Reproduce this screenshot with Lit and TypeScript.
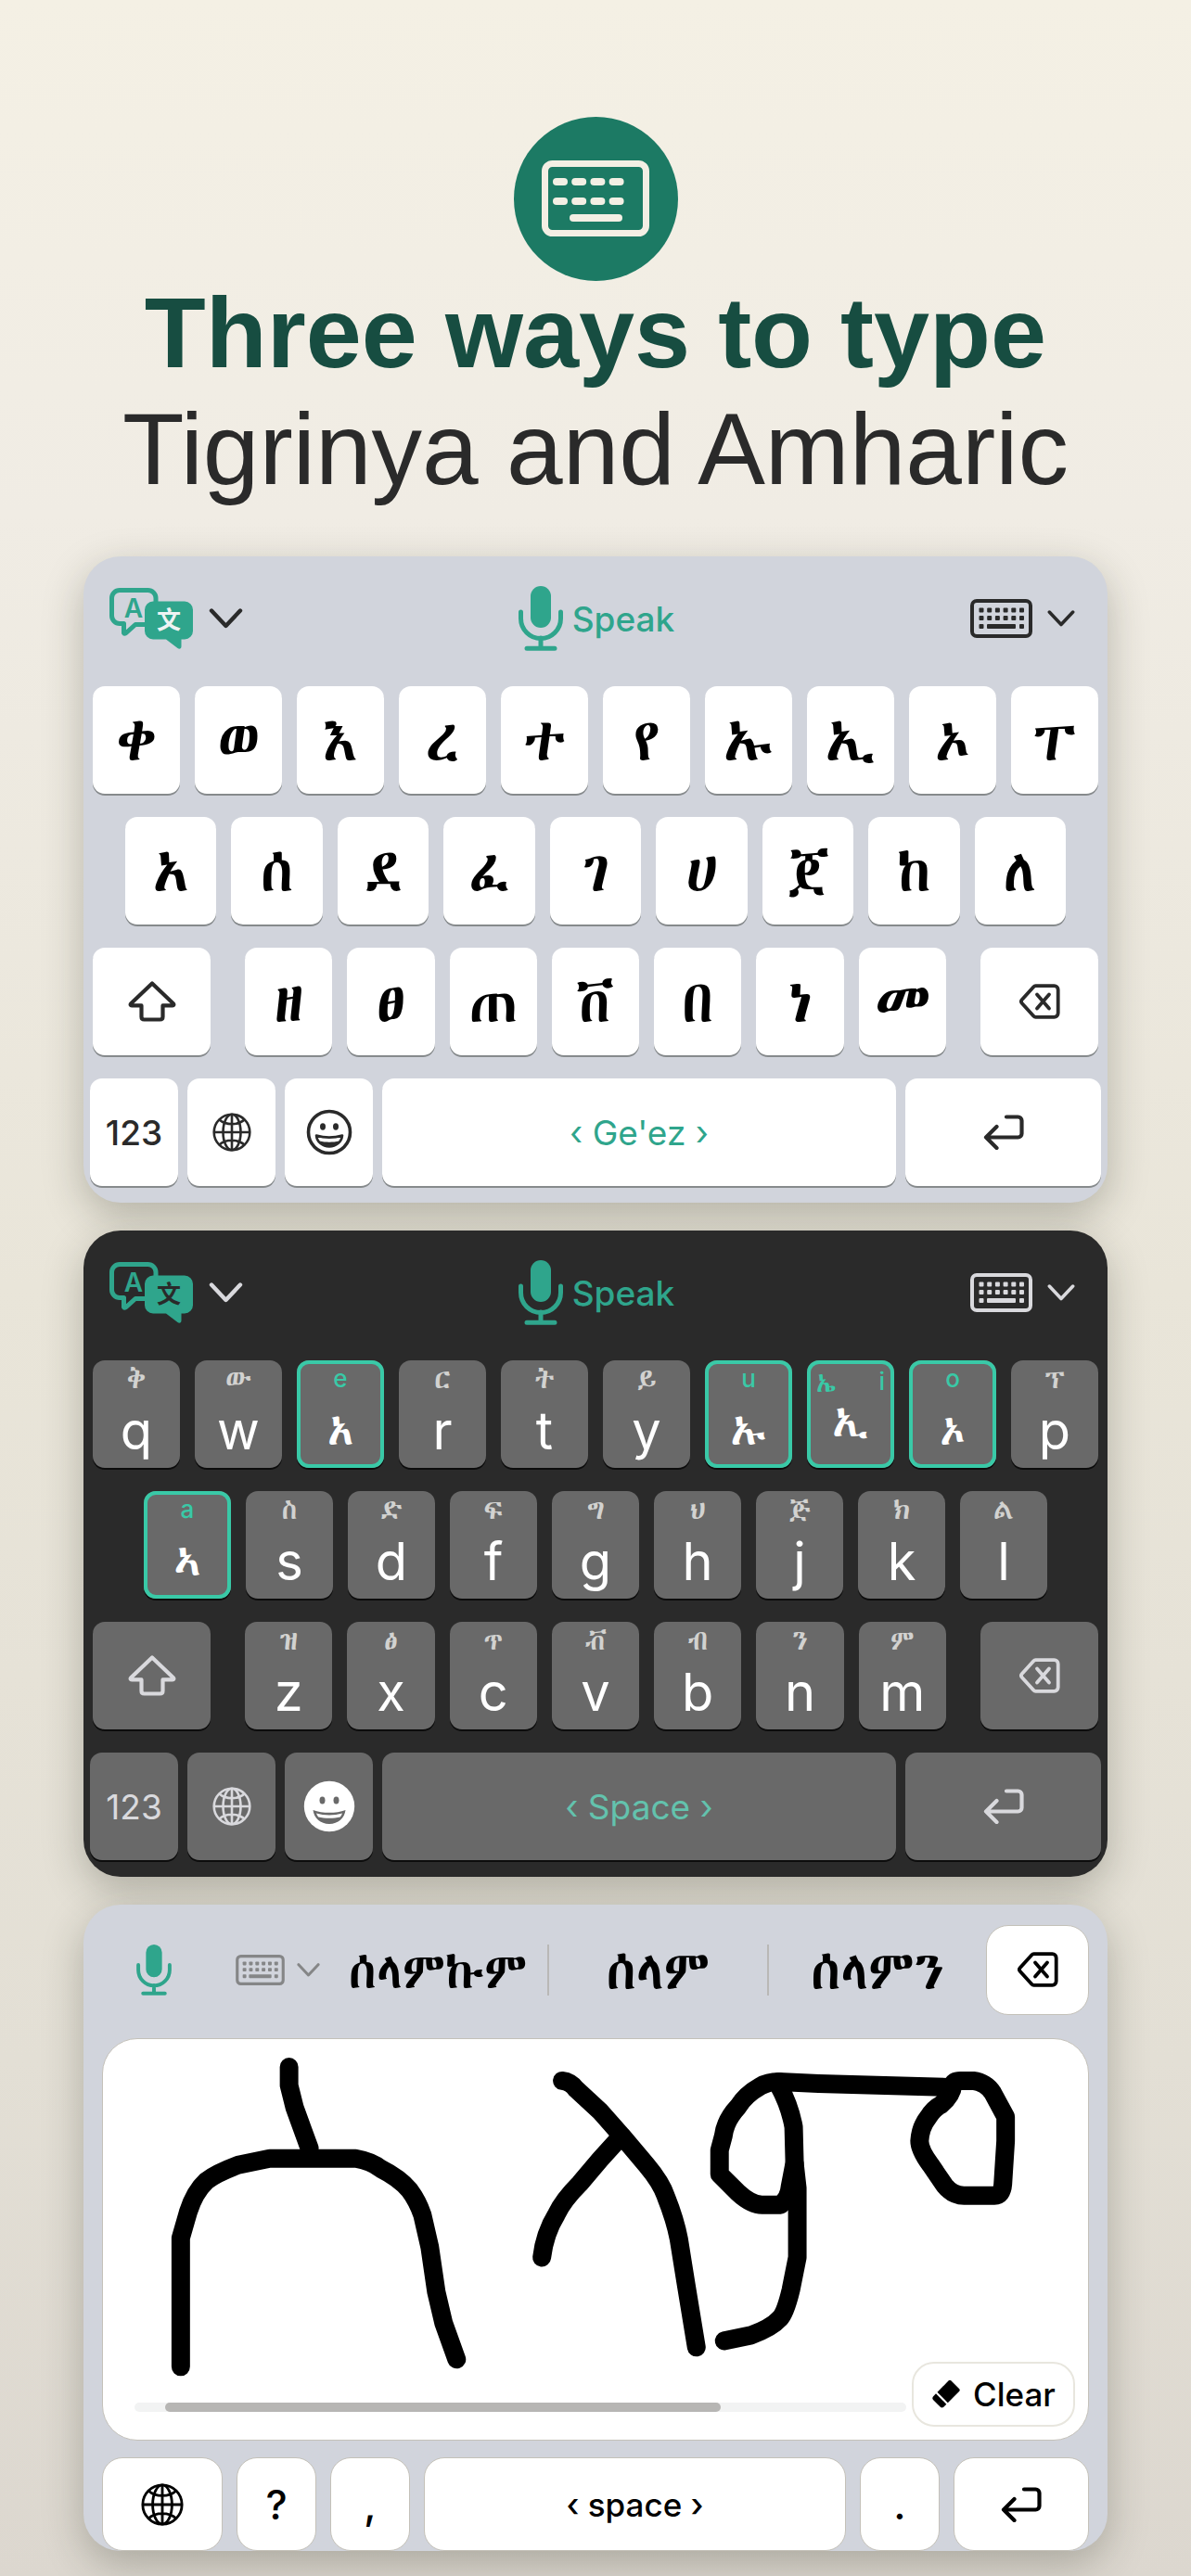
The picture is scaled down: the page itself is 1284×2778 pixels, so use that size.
import { LitElement, html, css, svg, nothing } from "lit";
import { customElement, property } from "lit/decorators.js";
import { classMap } from "lit/directives/class-map.js";

type Key = { main: string; sub?: string; alt?: string; vowel?: boolean };

const lightRows: string[][] = [
  ["ቀ", "ወ", "እ", "ረ", "ተ", "የ", "ኡ", "ኢ", "ኦ", "ፐ"],
  ["አ", "ሰ", "ደ", "ፈ", "ገ", "ሀ", "ጀ", "ከ", "ለ"],
  ["ዘ", "ፀ", "ጠ", "ቨ", "በ", "ነ", "መ"],
];

const k = (main: string, sub: string): Key => ({ main, sub });
const v = (main: string, sub: string, alt?: string): Key => ({ main, sub, alt, vowel: true });

const darkRows: Key[][] = [
  [k("q", "ቅ"), k("w", "ው"), v("አ", "e"), k("r", "ር"), k("t", "ት"), k("y", "ይ"), v("ኡ", "u"), v("ኢ", "i", "ኤ"), v("ኦ", "o"), k("p", "ፕ")],
  [v("ኣ", "a"), k("s", "ስ"), k("d", "ድ"), k("f", "ፍ"), k("g", "ግ"), k("h", "ህ"), k("j", "ጅ"), k("k", "ክ"), k("l", "ል")],
  [k("z", "ዝ"), k("x", "ፅ"), k("c", "ጥ"), k("v", "ቭ"), k("b", "ብ"), k("n", "ን"), k("m", "ም")],
];

const chevron = (w: number) => html`<svg width=${w} height=${Math.round(w * 0.6)} viewBox="0 0 36 22" aria-hidden="true">
  <path d="M2.5 2.5 18 19 33.5 2.5" fill="none" stroke="currentColor" stroke-width="4.4" stroke-linecap="round" stroke-linejoin="round" />
</svg>`;

const mic = (w: number, h: number) => html`<svg width=${w} height=${h} viewBox="0 0 48 70" aria-hidden="true">
  <rect x="13" y="0" width="22" height="45" rx="11" fill="currentColor" />
  <path d="M2.5 28v7a21.500 21.500 0 0 0 43 0v-7M24 56v10M9 67.200h30" fill="none" stroke="currentColor" stroke-width="5" stroke-linecap="round" />
</svg>`;

const keyboard = (w: number, h: number) => html`<svg width=${w} height=${h} viewBox="0 0 67 42" aria-hidden="true">
  <rect x="2" y="2" width="63" height="38" rx="5" fill="none" stroke="currentColor" stroke-width="4" />
  <g fill="currentColor">
    ${[0, 1, 2, 3, 4, 5].map((i) => svg`<rect x=${9.500 + i * 8.700} y="9.500" width="5" height="5" rx="1" /><rect x=${9.500 + i * 8.700} y="18" width="5" height="5" rx="1" />`)}
    <rect x="9.500" y="27" width="5" height="5" rx="1" />
    <rect x="18" y="27" width="31" height="5" rx="1" />
    <rect x="53" y="27" width="5" height="5" rx="1" />
  </g>
</svg>`;

const translate = html`<svg class="translate" width="91" height="66" viewBox="0 0 91 66" aria-hidden="true">
  <path d="M50 16V11a8.500 8.500 0 0 0-8.500-8.500H11A8.500 8.500 0 0 0 2.500 11v19A8.500 8.500 0 0 0 11 38.500h4.500V48.500q1 1.500 2.500 0L28 39.500h12" fill="none" stroke="currentColor" stroke-width="5" stroke-linejoin="round" />
  <text class="glyph-a" x="26" y="32" text-anchor="middle">A</text>
  <path d="M47 14.500h34a9 9 0 0 1 9 9v23a9 9 0 0 1-9 9h-3.500V63c0 2.500-2 3.500-4 2L61 55.500H47a9 9 0 0 1-9-9v-23a9 9 0 0 1 9-9Z" fill="currentColor" />
  <text class="glyph-zh" x="64" y="44" text-anchor="middle">文</text>
</svg>`;

const shift = html`<svg width="52" height="44" viewBox="0 0 52 44" aria-hidden="true">
  <path d="M26 2.500 3.200 24.200c-1 1-.5 2.200.8 2.200h10.500V38.500q0 3 3 3h17q3 0 3-3V26.400H48c1.300 0 1.800-1.200.8-2.200Z" fill="none" stroke="currentColor" stroke-width="4.200" stroke-linejoin="round" />
</svg>`;

const backspace = html`<svg width="44" height="38" viewBox="0 0 44 38" aria-hidden="true">
  <path d="M17.500 2.200H37.500a4.200 4.200 0 0 1 4.200 4.200V31.600a4.200 4.200 0 0 1-4.200 4.200H17.500a3 3 0 0 1-2.200-1L2.800 21a3 3 0 0 1 0-4L15.300 3.200a3 3 0 0 1 2.200-1Z" fill="none" stroke="currentColor" stroke-width="3.800" stroke-linejoin="round" />
  <path d="m19 11.500 13 15m0-15-13 15" stroke="currentColor" stroke-width="3.800" stroke-linecap="round" />
</svg>`;

const enter = html`<svg width="44" height="38" viewBox="0 0 44 38" aria-hidden="true">
  <path d="M25 2.500h12.500a4 4 0 0 1 4 4V20.500a4 4 0 0 1-4 4H3M14.500 13 3 24.500l11.500 11.500" fill="none" stroke="currentColor" stroke-width="4.200" stroke-linecap="round" stroke-linejoin="round" />
</svg>`;

const globe = (size: number) => html`<svg width=${size} height=${size} viewBox="0 0 42 42" aria-hidden="true">
  <g fill="none" stroke="currentColor" stroke-width="2.600">
    <circle cx="21" cy="21" r="19.300" />
    <ellipse cx="21" cy="21" rx="9.500" ry="19.300" />
    <path d="M21 1.700v38.600M1.700 21h38.600M7.500 7.500c7 6.300 20 6.300 27 0M7.500 34.500c7-6.300 20-6.300 27 0" />
  </g>
</svg>`;

const smileLine = html`<svg width="50" height="50" viewBox="0 0 50 50" aria-hidden="true">
  <circle cx="25" cy="25" r="22.500" fill="none" stroke="currentColor" stroke-width="3.600" />
  <ellipse cx="18" cy="19" rx="3" ry="3.700" fill="currentColor" />
  <ellipse cx="32" cy="19" rx="3" ry="3.700" fill="currentColor" />
  <path d="M11 28.500c8.500 2.600 19.500 2.600 28 0-.8 7-6.500 12-14 12s-13.200-5-14-12Z" fill="none" stroke="currentColor" stroke-width="2.600" stroke-linejoin="round" />
  <path d="M14.500 34.500c6.500 1.600 14.500 1.600 21 0-2 3.800-5.800 6-10.500 6s-8.500-2.200-10.500-6Z" fill="currentColor" />
</svg>`;

const smileSolid = html`<svg class="smile-solid" width="56" height="56" viewBox="0 0 56 56" aria-hidden="true">
  <circle cx="28" cy="28" r="27.200" fill="#fff" />
  <g fill="#696969">
    <ellipse cx="20.500" cy="21.500" rx="3" ry="3.900" />
    <ellipse cx="35.500" cy="21.500" rx="3" ry="3.900" />
    <path d="M10.500 32c10.500 3.800 24.500 3.800 35 0-1 8.500-8 15-17.500 15s-16.500-6.500-17.500-15Z" />
  </g>
  <path d="M14 35.500c8.500 2.600 19.500 2.600 28 0-.6 1.700-1.300 3-2.200 4-7 1.700-16.600 1.700-23.600 0-.9-1-1.600-2.300-2.200-4Z" fill="#fff" />
</svg>`;

const eraser = html`<svg width="32" height="32" viewBox="0 0 32 32" aria-hidden="true">
  <path d="M18.500 1.500q1.500-1.300 3 0l8.500 8.500q1.500 1.500 0 3L17.800 25.200 6.500 13.800Z" fill="currentColor" />
  <path d="M5 15.300 16.300 26.700l-3 3q-1.800 1.500-3.500 0L2 22q-1.500-1.700 0-3.500Z" fill="currentColor" />
</svg>`;

@customElement("key-board")
export class KeyBoard extends LitElement {
  @property({ type: Boolean, reflect: true }) dark = false;

  static styles = css`
    :host {
      display: block;
      border-radius: 40px;
      padding-bottom: 18px;
      background: #d1d4dc;
      color: #2a2a2a;
      box-shadow: 0 14px 44px rgba(40, 42, 30, 0.28);
    }
    :host([dark]) {
      background: #2a2a2a;
      color: #d9d9dd;
    }
    button {
      font: inherit;
      color: inherit;
      border: 0;
      padding: 0;
      margin: 0;
      background: none;
    }
    svg {
      display: block;
    }
    .bar {
      display: grid;
      grid-template-columns: 1fr auto 1fr;
      align-items: center;
      height: 134px;
      margin-bottom: 6px;
      padding: 0 35px 0 37px;
    }
    .tool {
      display: flex;
      align-items: center;
      gap: 16px;
    }
    .tool.mode {
      justify-self: end;
    }
    .tool.lang {
      margin-left: -9px;
    }
    .translate {
      color: #2fa58c;
    }
    .glyph-a {
      font: 600 28px Inter, "Liberation Sans", sans-serif;
      fill: #2fa58c;
    }
    .glyph-zh {
      font: 700 26px "Noto Sans CJK SC", sans-serif;
      fill: #eef3f3;
    }
    :host([dark]) .glyph-zh {
      fill: #2a2a2a;
    }
    .tool.speak {
      gap: 10px;
      color: #2fa58c;
      font-size: 37px;
      font-weight: 500;
    }
    .rows {
      display: grid;
      gap: 25px;
    }
    .row {
      display: flex;
      gap: 16px;
      padding: 0 10px;
    }
    .row.second {
      padding: 0 45px;
    }
    :host([dark]) .row.second {
      padding: 0 65px;
    }
    .row.third {
      gap: 37px;
    }
    .letters {
      display: flex;
      flex: 1;
      gap: 16px;
    }
    .row.last {
      gap: 10px;
      padding: 0 7px;
    }
    .key {
      flex: 1 1 0;
      display: flex;
      align-items: center;
      justify-content: center;
      height: 116px;
      border-radius: 13px;
      background: #fff;
      box-shadow: 0 2px 0 #868a8c;
      font-size: 64px;
      font-weight: 300;
      color: #000;
    }
    .key.fn {
      color: #2a2a2a;
      font-size: 37px;
      font-weight: 400;
    }
    .key.wide {
      flex: 0 0 127px;
    }
    .key.square {
      flex: 0 0 95px;
      font-weight: 500;
    }
    .key.enter {
      flex: 0 0 211px;
    }
    .key.space {
      color: #2fa58c;
    }
    :host([dark]) .key {
      background: #696969;
      box-shadow: 0 2px 0 #0c0c0c;
      color: #fff;
    }
    :host([dark]) .key.fn {
      color: #d9d9dd;
      font-weight: 400;
    }
    :host([dark]) .key.space {
      color: #63c2ad;
    }
    .key.dual {
      flex-direction: column;
      align-items: stretch;
      justify-content: flex-start;
    }
    .sub {
      display: flex;
      justify-content: center;
      font-size: 30px;
      line-height: 38px;
      color: #d2d2d0;
    }
    .main {
      font-size: 56px;
      font-weight: 400;
      line-height: 77px;
    }
    :host([dark]) .key.vowel {
      box-shadow: inset 0 0 0 4px #39c9a7, 0 2px 0 #0c0c0c;
    }
    .vowel .sub {
      font-size: 26px;
      font-weight: 500;
      line-height: 40px;
      color: #39c9a7;
    }
    .vowel .main {
      font-size: 46px;
      font-weight: 300;
      line-height: 68px;
    }
    .split .sub {
      justify-content: space-between;
      padding: 0 10px;
      line-height: 46px;
    }
    .split .alt {
      font-size: 30px;
    }
    .split .main {
      line-height: 38px;
    }
  `;

  private letter(key: Key | string) {
    if (typeof key === "string") return html`<button class="key">${key}</button>`;
    const cls = { key: true, dual: true, vowel: !!key.vowel, split: !!key.alt };
    return html`<button class=${classMap(cls)}>
      <span class="sub">${key.alt ? html`<span class="alt">${key.alt}</span>` : nothing}<span>${key.sub}</span></span>
      <span class="main">${key.main}</span>
    </button>`;
  }

  render() {
    const rows: (Key | string)[][] = this.dark ? darkRows : lightRows;
    return html`
      <div class="bar">
        <button class="tool lang" aria-label="Translate">${translate}${chevron(37)}</button>
        <button class="tool speak">${mic(48, 70)}<span>Speak</span></button>
        <button class="tool mode" aria-label="Keyboard layout">${keyboard(67, 48)}${chevron(30)}</button>
      </div>
      <div class="rows">
        <div class="row">${rows[0].map((x) => this.letter(x))}</div>
        <div class="row second">${rows[1].map((x) => this.letter(x))}</div>
        <div class="row third">
          <button class="key fn wide" aria-label="Shift">${shift}</button>
          <div class="letters">${rows[2].map((x) => this.letter(x))}</div>
          <button class="key fn wide" aria-label="Backspace">${backspace}</button>
        </div>
        <div class="row last">
          <button class="key fn square">123</button>
          <button class="key fn square" aria-label="Next language">${globe(42)}</button>
          <button class="key fn square" aria-label="Emoji">${this.dark ? smileSolid : smileLine}</button>
          <button class="key fn space">${this.dark ? "‹ Space ›" : "‹ Ge'ez ›"}</button>
          <button class="key fn enter" aria-label="Return">${enter}</button>
        </div>
      </div>
    `;
  }
}

@customElement("hand-board")
export class HandBoard extends LitElement {
  static styles = css`
    :host {
      display: block;
      overflow: hidden;
      border-radius: 40px;
      padding: 0 20px;
      background: #d1d4dc;
      color: #000;
      box-shadow: 0 14px 44px rgba(40, 42, 30, 0.28);
    }
    button {
      font: inherit;
      color: inherit;
      border: 0;
      padding: 0;
      margin: 0;
      background: none;
    }
    svg {
      display: block;
    }
    .bar {
      display: flex;
      align-items: center;
      height: 140px;
      padding-left: 37px;
    }
    .mic {
      color: #2fa58c;
    }
    .mode {
      display: flex;
      align-items: center;
      gap: 13px;
      margin-left: 69px;
      color: #858687;
    }
    .words {
      flex: 1;
      display: grid;
      grid-template-columns: 1fr 1fr 1fr;
      margin: 0 0 0 9px;
    }
    .word {
      min-width: 0;
      height: 55px;
      font-size: 58px;
      font-weight: 300;
      line-height: 51px;
      white-space: nowrap;
    }
    .word.long {
      font-size: 54px;
    }
    .word + .word {
      border-left: 2px solid #b9b8b6;
    }
    .delete {
      flex: 0 0 111px;
      display: flex;
      align-items: center;
      justify-content: center;
      height: 97px;
      border: 1px solid #c4c1b9;
      border-radius: 24px;
      background: #fff;
    }
    .pad {
      position: relative;
      margin-top: 4px;
      border: 1px solid #c4c1b9;
      border-radius: 38px;
      background: #fff;
    }
    .ink {
      width: 100%;
      height: auto;
    }
    .foot {
      position: absolute;
      inset: auto 14px 14px 34px;
      display: flex;
      align-items: center;
      gap: 6px;
    }
    .track {
      flex: 1;
      height: 10px;
      margin-bottom: 16px;
      align-self: flex-end;
      border-radius: 5px;
      background: #f2f3f3;
    }
    .thumb {
      width: 72%;
      height: 100%;
      margin-left: 4%;
      border-radius: 5px;
      background: #b7b6b4;
    }
    .clear {
      display: flex;
      align-items: center;
      justify-content: center;
      gap: 13px;
      width: 176px;
      height: 70px;
      border: 2px solid #e8e6de;
      border-radius: 24px;
      background: #fff;
      font-size: 35px;
      font-weight: 500;
    }
    .row {
      display: flex;
      gap: 15px;
      margin-top: 18px;
    }
    .key {
      flex: 0 0 86px;
      display: flex;
      align-items: center;
      justify-content: center;
      height: 101px;
      border: 1px solid #c4c1b9;
      border-radius: 22px;
      background: #fff;
      font-size: 44px;
      font-weight: 500;
    }
    .key.globe {
      flex-basis: 130px;
    }
    .key.enter {
      flex-basis: 146px;
    }
    .key.space {
      flex: 1;
      font-size: 35px;
    }
  `;

  render() {
    return html`
      <div class="bar">
        <button class="mic" aria-label="Speak">${mic(38, 55)}</button>
        <button class="mode" aria-label="Keyboard layout">${keyboard(53, 33)}${chevron(25)}</button>
        <div class="words">
          <button class="word long">ሰላምኩም</button>
          <button class="word">ሰላም</button>
          <button class="word">ሰላምን</button>
        </div>
        <button class="delete" aria-label="Backspace">${backspace}</button>
      </div>
      <div class="pad">
        <svg class="ink" viewBox="0 0 1064 433" role="img" aria-label="Handwriting">
          <g fill="none" stroke="#000" stroke-width="20" stroke-linecap="round" stroke-linejoin="round">
            <path d="M201 30V50L207 74 215 96 223 118" />
            <path d="M84 354V215L92 187Q99 165 112 153 122 145 146 136L180 129H273Q290 132 300 140 320 150 331 163 340 175 345 190L353 225 360 273 368 307 382 346" />
            <path d="M496 45Q505 46 511 54L537 78 560 104 587 136Q603 155 608 170 618 195 622 216L630 266 641 333" />
            <path d="M557 108 537 130 515 156Q497 174 490 189 477 210 474 236" />
            <path d="M730 46Q718 46 710 51 694 60 686 73 672 88 670 105L666 120V146L686 166Q700 179 712 179H732Q741 172 742 160L747 134 746 95Q742 72 730 50" />
            <path d="M747 134 750 161V236L743 271Q737 296 731 302 722 312 700 320L671 326" />
            <path d="M730 46 773 48 845 50 913 52" />
            <path d="M918 50Q918 45 926 45H940Q954 47 961 58L975 84V110L972 157Q971 169 963 169H930Q918 169 909 158L894 136Q882 120 882 110 883 95 891 85 897 75 905 71 917 61 918 50" />
          </g>
        </svg>
        <div class="foot">
          <div class="track"><div class="thumb"></div></div>
          <button class="clear">${eraser}<span>Clear</span></button>
        </div>
      </div>
      <div class="row">
        <button class="key globe" aria-label="Next language">${globe(46)}</button>
        <button class="key">?</button>
        <button class="key">,</button>
        <button class="key space">‹ space ›</button>
        <button class="key">.</button>
        <button class="key enter" aria-label="Return">${enter}</button>
      </div>
    `;
  }
}

@customElement("app-root")
export class AppRoot extends LitElement {
  static styles = css`
    :host {
      display: block;
      box-sizing: border-box;
      min-height: 100vh;
      padding: 126px 90px 26px;
      background: linear-gradient(#f4f0e4 0, #f0ece4 20%, #e9e5d9 50%, #e3dfd5 80%, #dcd7cf 100%);
      font-family: Inter, "Abyssinica SIL", "Noto Sans Ethiopic", "Noto Serif Ethiopic", "Noto Sans", serif;
    }
    header {
      display: flex;
      flex-direction: column;
      align-items: center;
      margin: 0 -60px 47px;
      font-family: "Liberation Sans", Arial, sans-serif;
      text-align: center;
    }
    .badge {
      display: block;
      width: 177px;
      height: 177px;
    }
    h1,
    p {
      margin: 0;
    }
    h1 {
      font-size: 108px;
      line-height: 112px;
      color: #174d41;
    }
    p {
      font-size: 109px;
      line-height: 138px;
      color: #2a2a2a;
    }
    main {
      display: grid;
      gap: 30px;
    }
  `;

  render() {
    return html`
      <header>
        <svg class="badge" viewBox="0 0 177 177" aria-hidden="true">
          <circle cx="88.500" cy="88.500" r="88.500" fill="#1c7a64" />
          <rect x="33.500" y="50.500" width="109" height="75" rx="8" fill="none" stroke="#f3efe4" stroke-width="7" />
          <g fill="#f3efe4">
            ${[0, 1, 2, 3].map((i) => svg`<rect x=${42 + i * 20.200} y="66" width="16" height="8" rx="4" /><rect x=${42 + i * 20.200} y="87" width="16" height="8" rx="4" />`)}
            <rect x="60" y="105" width="57" height="8" rx="4" />
          </g>
        </svg>
        <h1>Three ways to type</h1>
        <p>Tigrinya and Amharic</p>
      </header>
      <main>
        <key-board></key-board>
        <key-board dark></key-board>
        <hand-board></hand-board>
      </main>
    `;
  }
}
